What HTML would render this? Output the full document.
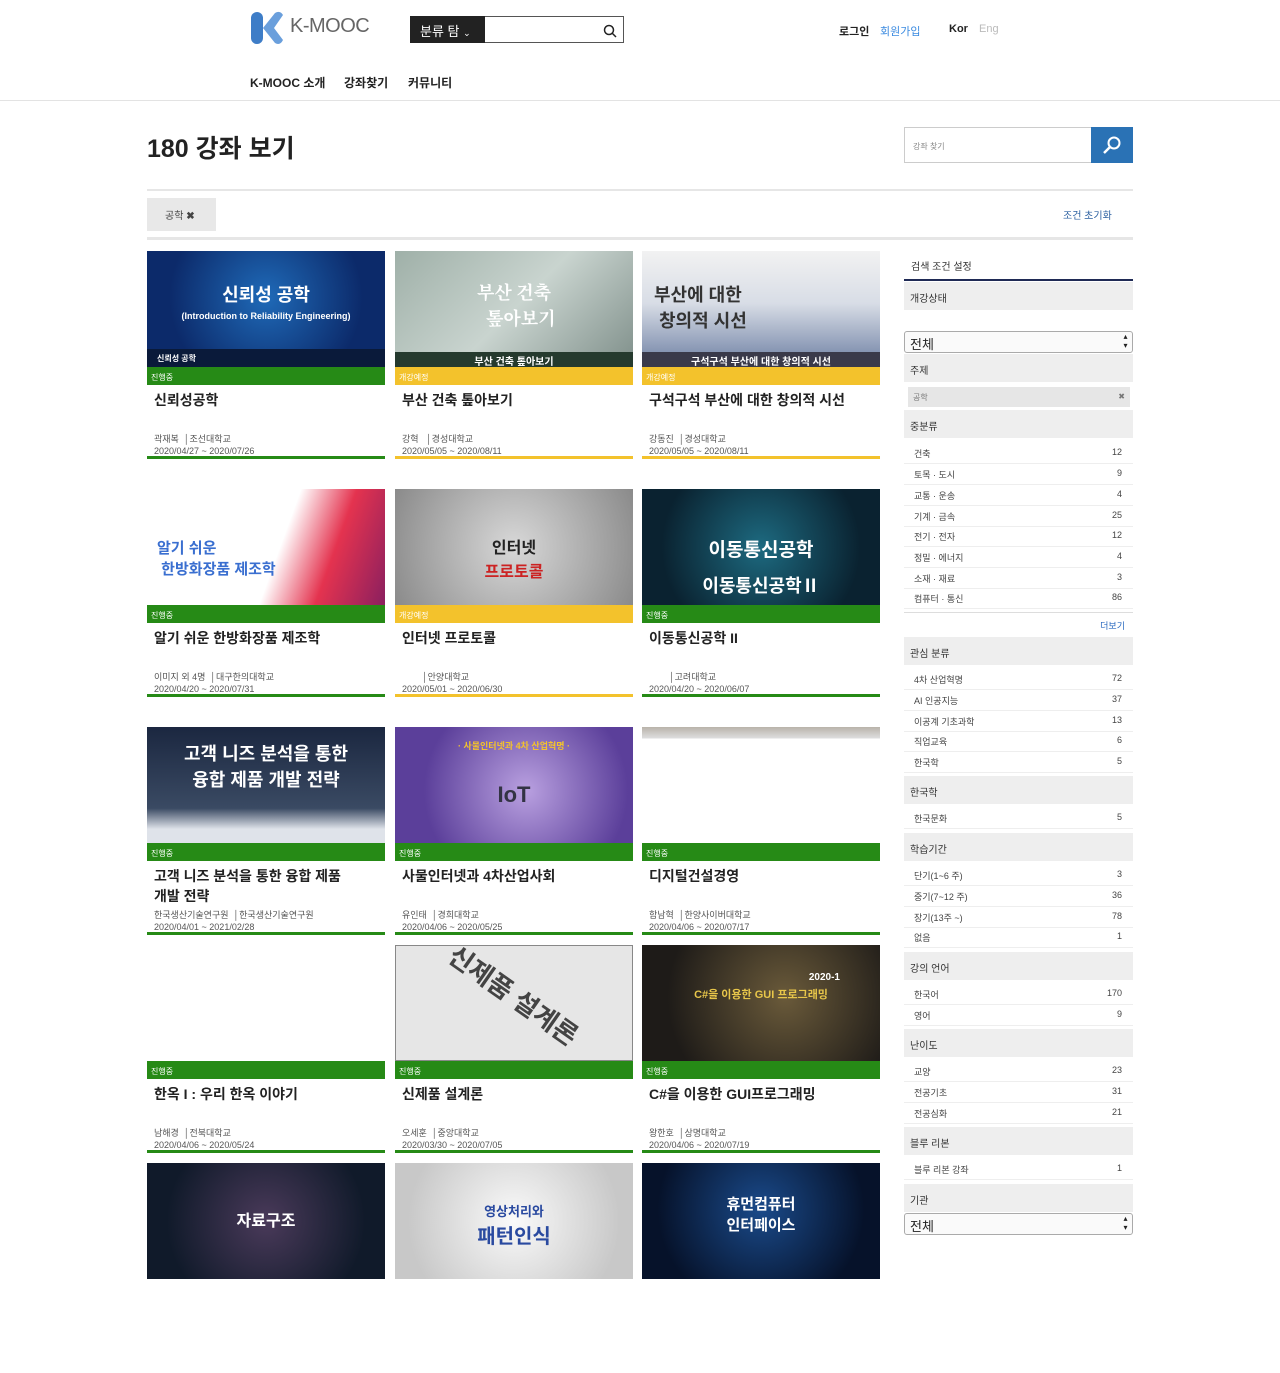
<!DOCTYPE html>
<html><head><meta charset="utf-8">
<style>
*{margin:0;padding:0;box-sizing:border-box}
body{width:1280px;height:1280px;position:relative;overflow:hidden;background:#fff;font-family:"Liberation Sans","Noto Sans CJK KR",sans-serif;color:#222}
.a{position:absolute}
.card{position:absolute;width:238px;height:210px}
.thumb{position:absolute;left:0;top:0;width:238px;height:116px;overflow:hidden;color:#fff;font-weight:bold;text-align:center}
.st{position:absolute;left:0;top:116px;width:238px;height:18px;font-size:8px;color:#fff;padding:5px 4px}
.g{background:#268a16}.y{background:#f3c22c}
.tt{position:absolute;left:7px;top:139px;font-size:14px;font-weight:bold;color:#222;line-height:20px;width:225px}
.mt{position:absolute;left:7px;top:181px;font-size:9px;color:#555}
.dt{position:absolute;left:7px;top:195px;font-size:9px;color:#555}
.bl{position:absolute;left:0;top:205px;width:238px;height:3px}
.gb{position:absolute;left:904px;width:229px;height:28px;background:#eee;font-size:10px;color:#333;padding:8px 6px}
.it{position:absolute;left:904px;width:229px;height:20px;font-size:9px;color:#444;padding:3px 10px;border-bottom:1px solid #eee}
.it span{float:right;margin-right:1px}
.sel{position:absolute;left:904px;width:229px;height:22px;border:1px solid #aaa;border-radius:3px;font-size:13px;padding:2px 5px;background:#fafafa}
.sel:after{content:"▴▾";position:absolute;right:3px;top:0;font-size:8px;writing-mode:vertical-lr;line-height:8px}
</style></head><body>
<!-- header -->
<svg class="a" style="left:250px;top:11px" width="36" height="34" viewBox="0 0 36 34"><rect x="1" y="1" width="12" height="32" rx="6" fill="#3e7dc7"/><path d="M13 17 L25 2 Q30 -1 33 4 L24 17 L33 29 Q30 35 25 32Z" fill="#6a9fdc"/></svg>
<div class="a" style="left:290px;top:15px;font-size:20px;color:#666;letter-spacing:-0.5px">K-MOOC</div>
<div class="a" style="left:410px;top:16px;width:214px;height:27px;border:1px solid #555"></div>
<div class="a" style="left:410px;top:16px;width:75px;height:27px;background:#222;color:#fff;font-size:13px;padding:5px 10px">분류 탐 <span style="font-size:9px">⌄</span></div>
<svg class="a" style="left:603px;top:24px" width="14" height="14"><circle cx="6" cy="6" r="4.5" stroke="#222" stroke-width="1.5" fill="none"/><path d="M9 9l4 4" stroke="#222" stroke-width="1.5"/></svg>
<div class="a" style="left:839px;top:23px;font-size:11px;font-weight:bold">로그인</div>
<div class="a" style="left:880px;top:23px;font-size:11px;color:#3a8ae0">회원가입</div>
<div class="a" style="left:949px;top:23px;font-size:11px;font-weight:bold">Kor</div>
<div class="a" style="left:979px;top:23px;font-size:11px;color:#bbb">Eng</div>
<div class="a" style="left:250px;top:74px;font-size:12px;font-weight:bold">K-MOOC 소개</div>
<div class="a" style="left:344px;top:74px;font-size:12px;font-weight:bold">강좌찾기</div>
<div class="a" style="left:408px;top:74px;font-size:12px;font-weight:bold">커뮤니티</div>
<div class="a" style="left:0;top:100px;width:1280px;height:1px;background:#e3e3e3"></div>
<!-- title -->
<div class="a" style="left:147px;top:129px;font-size:25px;font-weight:bold">180 강좌 보기</div>
<div class="a" style="left:904px;top:127px;width:188px;height:36px;border:1px solid #ccc;font-size:8px;color:#888;padding:13px 8px">강좌 찾기</div>
<div class="a" style="left:1091px;top:127px;width:42px;height:36px;background:#2a72b5"></div>
<svg class="a" style="left:1102px;top:135px" width="20" height="20"><circle cx="12" cy="8" r="5.5" stroke="#fff" stroke-width="2" fill="none"/><path d="M8 12l-6 6" stroke="#fff" stroke-width="2.5"/></svg>
<div class="a" style="left:147px;top:189px;width:986px;height:2px;background:#e6e6e6"></div>
<div class="a" style="left:147px;top:198px;width:69px;height:33px;background:#e8e8e8;font-size:10px;color:#444;padding:9px 18px">공학 <b>✖</b></div>
<div class="a" style="left:1063px;top:207px;font-size:10px;color:#2a5fa0">조건 초기화</div>
<div class="a" style="left:147px;top:237px;width:986px;height:3px;background:#e6e6e6"></div>

<!-- cards -->
<div class="card" style="left:147px;top:251px"><div class="thumb" style="background:radial-gradient(circle at 50% 40%,#1f6ab8,#0c2a6a 70%)"><div style="margin-top:30px;font-size:18px">신뢰성 공학</div><div style="font-size:9px;margin-top:4px">(Introduction to Reliability Engineering)</div><div style="position:absolute;bottom:0;width:100%;height:18px;background:#0a1a3a;font-size:8px;text-align:left;padding:4px 10px">신뢰성 공학</div></div><div class="st g">진행중</div><div class="tt">신뢰성공학</div><div class="mt">곽재복 &nbsp;│조선대학교</div><div class="dt">2020/04/27 ~ 2020/07/26</div><div class="bl g"></div></div>
<div class="card" style="left:395px;top:251px"><div class="thumb" style="background:linear-gradient(135deg,#9fb0a8,#c9d4cf 50%,#7f8f8a)"><div style="margin-top:28px;font-size:18px;font-family:'Noto Serif CJK SC',serif">부산 건축<br>&nbsp;&nbsp;&nbsp;톺아보기</div><div style="position:absolute;bottom:0;width:100%;height:15px;background:#253a2e;font-size:10px;padding:1px">부산 건축 톺아보기</div></div><div class="st y">개강예정</div><div class="tt">부산 건축 톺아보기</div><div class="mt">강혁 &nbsp;&nbsp;│경성대학교</div><div class="dt">2020/05/05 ~ 2020/08/11</div><div class="bl y"></div></div>
<div class="card" style="left:642px;top:251px"><div class="thumb" style="background:linear-gradient(180deg,#f2f2f2 0%,#d8dde6 45%,#6d7fa3 100%)"><div style="margin-top:30px;font-size:18px;color:#333;text-align:left;padding-left:12px">부산에 대한<br>&nbsp;창의적 시선</div><div style="position:absolute;bottom:0;width:100%;height:15px;background:#3a3a4a;font-size:10px;padding:1px">구석구석 부산에 대한 창의적 시선</div></div><div class="st y">개강예정</div><div class="tt">구석구석 부산에 대한 창의적 시선</div><div class="mt">강동진 &nbsp;│경성대학교</div><div class="dt">2020/05/05 ~ 2020/08/11</div><div class="bl y"></div></div>

<div class="card" style="left:147px;top:489px"><div class="thumb" style="background:linear-gradient(110deg,#fff 55%,#e4334f 75%,#8a1f5f)"><div style="margin-top:48px;font-size:15px;color:#3a6fd0;text-align:left;padding-left:10px">알기 쉬운<br>&nbsp;한방화장품 제조학</div></div><div class="st g">진행중</div><div class="tt">알기 쉬운 한방화장품 제조학</div><div class="mt">이미지 외 4명 &nbsp;│대구한의대학교</div><div class="dt">2020/04/20 ~ 2020/07/31</div><div class="bl g"></div></div>
<div class="card" style="left:395px;top:489px"><div class="thumb" style="background:radial-gradient(circle at 50% 50%,#d8d8d8,#8a8a8a)"><div style="margin-top:45px;font-size:16px;color:#222">인터넷<br><span style="color:#c22">프로토콜</span></div></div><div class="st y">개강예정</div><div class="tt">인터넷 프로토콜</div><div class="mt">&nbsp;&nbsp;&nbsp;&nbsp;&nbsp;&nbsp;&nbsp;&nbsp;│안양대학교</div><div class="dt">2020/05/01 ~ 2020/06/30</div><div class="bl y"></div></div>
<div class="card" style="left:642px;top:489px"><div class="thumb" style="background:radial-gradient(circle at 50% 50%,#1d6a80,#0a2230 75%)"><div style="margin-top:46px;font-size:19px">이동통신공학</div><div style="font-size:18px;margin-top:10px">이동통신공학Ⅱ</div></div><div class="st g">진행중</div><div class="tt">이동통신공학 II</div><div class="mt">&nbsp;&nbsp;&nbsp;&nbsp;&nbsp;&nbsp;&nbsp;&nbsp;│고려대학교</div><div class="dt">2020/04/20 ~ 2020/06/07</div><div class="bl g"></div></div>

<div class="card" style="left:147px;top:727px"><div class="thumb" style="background:linear-gradient(180deg,#1b2740,#3a4a63 70%,#dfe3ea 88%)"><div style="margin-top:13px;font-size:18px">고객 니즈 분석을 통한<br>융합 제품 개발 전략</div></div><div class="st g">진행중</div><div class="tt">고객 니즈 분석을 통한 융합 제품<br>개발 전략</div><div class="mt">한국생산기술연구원 &nbsp;│한국생산기술연구원</div><div class="dt">2020/04/01 ~ 2021/02/28</div><div class="bl g"></div></div>
<div class="card" style="left:395px;top:727px"><div class="thumb" style="background:radial-gradient(circle at 55% 55%,#b9a0e0,#5b3f9a 70%)"><div style="margin-top:12px;font-size:9px;color:#f3c22c">· 사물인터넷과 4차 산업혁명 ·</div><div style="margin-top:30px;font-size:22px;color:#334">IoT</div></div><div class="st g">진행중</div><div class="tt">사물인터넷과 4차산업사회</div><div class="mt">유인태 &nbsp;│경희대학교</div><div class="dt">2020/04/06 ~ 2020/05/25</div><div class="bl g"></div></div>
<div class="card" style="left:642px;top:727px"><div class="thumb" style="background:linear-gradient(180deg,#b9b3aa 0,#ddd 11px,#fff 12px)"></div><div class="st g">진행중</div><div class="tt">디지털건설경영</div><div class="mt">함남혁 &nbsp;│한양사이버대학교</div><div class="dt">2020/04/06 ~ 2020/07/17</div><div class="bl g"></div></div>

<div class="card" style="left:147px;top:945px"><div class="thumb" style="background:#fff"></div><div class="st g">진행중</div><div class="tt">한옥 I : 우리 한옥 이야기</div><div class="mt">남해경 &nbsp;│전북대학교</div><div class="dt">2020/04/06 ~ 2020/05/24</div><div class="bl g"></div></div>
<div class="card" style="left:395px;top:945px"><div class="thumb" style="background:#e6e6e6;border:1px solid #888"><div style="margin-top:30px;font-size:26px;color:#444;transform:rotate(35deg)">신제품 설계론</div></div><div class="st g">진행중</div><div class="tt">신제품 설계론</div><div class="mt">오세훈 &nbsp;│중앙대학교</div><div class="dt">2020/03/30 ~ 2020/07/05</div><div class="bl g"></div></div>
<div class="card" style="left:642px;top:945px"><div class="thumb" style="background:radial-gradient(circle at 60% 45%,#6a5a3a,#1e1b18 75%)"><div style="margin-top:27px;font-size:10px;text-align:right;padding-right:40px">2020-1</div><div style="font-size:11px;color:#e8c64a;margin-top:3px">C#을 이용한 GUI 프로그래밍</div></div><div class="st g">진행중</div><div class="tt">C#을 이용한 GUI프로그래밍</div><div class="mt">왕한호 &nbsp;│상명대학교</div><div class="dt">2020/04/06 ~ 2020/07/19</div><div class="bl g"></div></div>

<div class="card" style="left:147px;top:1163px"><div class="thumb" style="background:radial-gradient(circle at 50% 50%,#4a3a5a,#101a2a 75%)"><div style="margin-top:44px;font-size:16px">자료구조</div></div></div>
<div class="card" style="left:395px;top:1163px"><div class="thumb" style="background:radial-gradient(circle at 50% 50%,#fafafa,#c8c8c8 80%)"><div style="margin-top:38px;font-size:13px;color:#2a4aa0">영상처리와</div><div style="font-size:20px;color:#2a4aa0">패턴인식</div></div></div>
<div class="card" style="left:642px;top:1163px"><div class="thumb" style="background:radial-gradient(circle at 50% 40%,#1a4a8a,#06122a 75%)"><div style="margin-top:30px;font-size:15px">휴먼컴퓨터<br>인터페이스</div></div></div>

<!-- sidebar -->
<div class="a" style="left:911px;top:258px;font-size:10px;color:#333">검색 조건 설정</div>
<div class="a" style="left:904px;top:279px;width:229px;height:2px;background:#1f2a55"></div>
<div class="gb" style="top:282px">개강상태</div>
<div class="sel" style="top:331px">전체</div>
<div class="gb" style="top:354px">주제</div>
<div class="a" style="left:908px;top:387px;width:222px;height:20px;background:#e6e6e6;font-size:8px;color:#777;padding:5px 5px">공학<span style="float:right">✖</span></div>
<div class="gb" style="top:410px">중분류</div>
<div class="it" style="top:444px">건축<span>12</span></div>
<div class="it" style="top:465px">토목 · 도시<span>9</span></div>
<div class="it" style="top:486px">교통 · 운송<span>4</span></div>
<div class="it" style="top:507px">기계 · 금속<span>25</span></div>
<div class="it" style="top:527px">전기 · 전자<span>12</span></div>
<div class="it" style="top:548px">정밀 · 에너지<span>4</span></div>
<div class="it" style="top:569px">소재 · 재료<span>3</span></div>
<div class="it" style="top:589px">컴퓨터 · 통신<span>86</span></div>
<div class="a" style="left:904px;top:612px;width:229px;height:24px;border-top:1px solid #ddd;font-size:9px;color:#2a6ac0;text-align:right;padding:6px 8px">더보기</div>
<div class="gb" style="top:637px">관심 분류</div>
<div class="it" style="top:670px">4차 산업혁명<span>72</span></div>
<div class="it" style="top:691px">AI 인공지능<span>37</span></div>
<div class="it" style="top:712px">이공계 기초과학<span>13</span></div>
<div class="it" style="top:732px">직업교육<span>6</span></div>
<div class="it" style="top:753px">한국학<span>5</span></div>
<div class="gb" style="top:776px">한국학</div>
<div class="it" style="top:809px">한국문화<span>5</span></div>
<div class="gb" style="top:833px">학습기간</div>
<div class="it" style="top:866px">단기(1~6 주)<span>3</span></div>
<div class="it" style="top:887px">중기(7~12 주)<span>36</span></div>
<div class="it" style="top:908px">장기(13주 ~)<span>78</span></div>
<div class="it" style="top:928px">없음<span>1</span></div>
<div class="gb" style="top:952px">강의 언어</div>
<div class="it" style="top:985px">한국어<span>170</span></div>
<div class="it" style="top:1006px">영어<span>9</span></div>
<div class="gb" style="top:1029px">난이도</div>
<div class="it" style="top:1062px">교양<span>23</span></div>
<div class="it" style="top:1083px">전공기초<span>31</span></div>
<div class="it" style="top:1104px">전공심화<span>21</span></div>
<div class="gb" style="top:1127px">블루 리본</div>
<div class="it" style="top:1160px">블루 리본 강좌<span>1</span></div>
<div class="gb" style="top:1184px">기관</div>
<div class="sel" style="top:1213px">전체</div>
</body></html>
